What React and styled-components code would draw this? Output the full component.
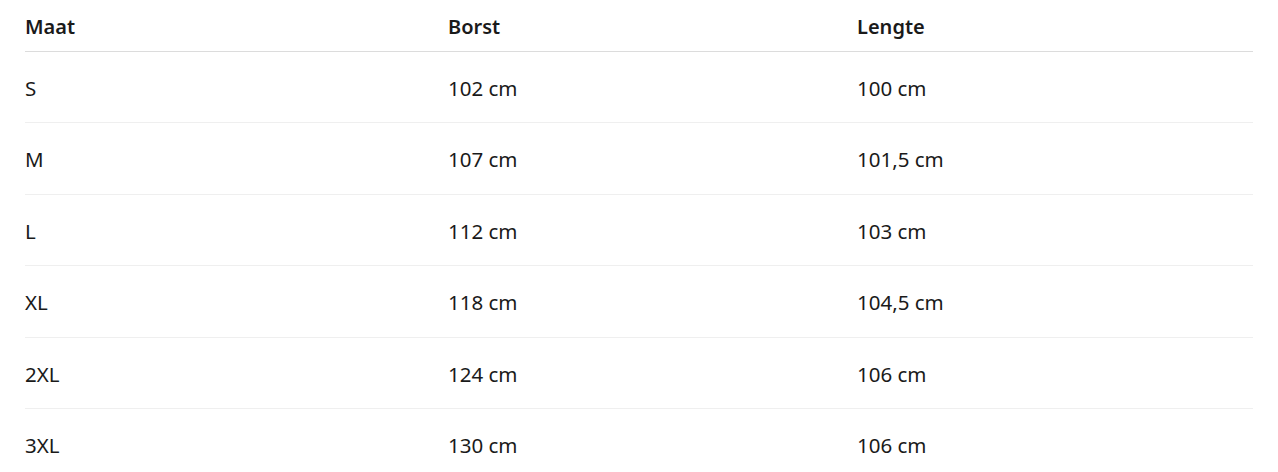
import React from "react";
import styled, { createGlobalStyle } from "styled-components";

const Global = createGlobalStyle`
  html, body { margin: 0; padding: 0; background: #fff; }
  body { font-family: "Noto Sans", "Open Sans", sans-serif; color: #1a1a1a; }
`;

const Wrap = styled.div`
  padding: 0 25px;
`;

const Table = styled.table`
  width: 100%;
  border-collapse: collapse;
  table-layout: fixed;
`;

const HeadCell = styled.th`
  text-align: left;
  font-size: 20px;
  font-weight: 600;
  height: 51px;
  padding: 3px 0 0 0;
  box-sizing: border-box;
  border-bottom: 1px solid #dcdcdc;
  width: ${(p) => p.$w || "auto"};
`;

const Row = styled.tr`
  border-bottom: 1px solid #efefef;
`;

const Cell = styled.td`
  height: 71.5px;
  padding: 2px 0 0 0;
  box-sizing: border-box;
  font-size: 20.5px;
  font-weight: 400;
  vertical-align: middle;
`;

const rows = [
  ["S", "102 cm", "100 cm"],
  ["M", "107 cm", "101,5 cm"],
  ["L", "112 cm", "103 cm"],
  ["XL", "118 cm", "104,5 cm"],
  ["2XL", "124 cm", "106 cm"],
  ["3XL", "130 cm", "106 cm"],
];

export default function App() {
  return (
    <Wrap>
      <Global />
      <Table>
        <thead>
          <tr>
            <HeadCell $w="423px">Maat</HeadCell>
            <HeadCell $w="409px">Borst</HeadCell>
            <HeadCell>Lengte</HeadCell>
          </tr>
        </thead>
        <tbody>
          {rows.map((r) => (
            <Row key={r[0]}>
              {r.map((c, i) => (
                <Cell key={i}>{c}</Cell>
              ))}
            </Row>
          ))}
        </tbody>
      </Table>
    </Wrap>
  );
}
